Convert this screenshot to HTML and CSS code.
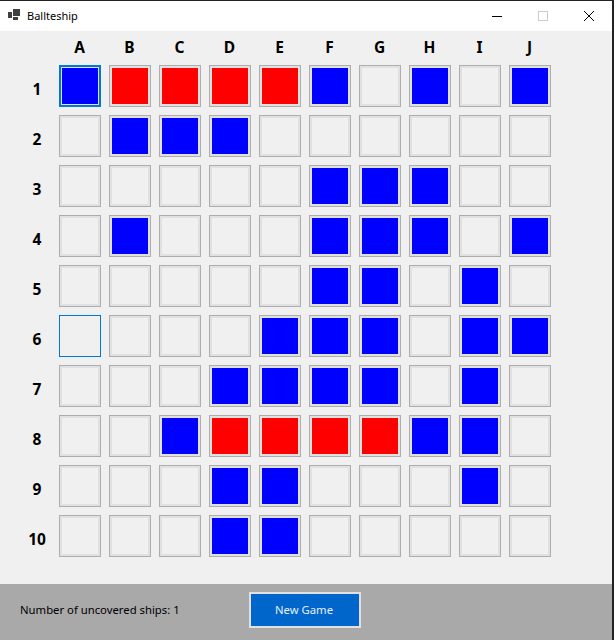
FILE: index.html
```html
<!DOCTYPE html>
<html>
  <head>
    <title>Ballteship</title>
    <meta charset="utf-8" />
    <link rel="stylesheet" href="styles.css">
  </head>
  <body>
    <div class="window">
      <div class="titlebar">
        <svg class="app-icon" width="13" height="12" viewBox="0 0 13 12">
          <rect x="0" y="4" width="4" height="6" fill="#404040" />
          <rect x="5" y="1" width="7" height="7" fill="#404040" />
          <rect x="5" y="9" width="5" height="3" fill="#404040" />
        </svg>
        <span class="title">Ballteship</span>
        <div class="controls">
          <svg class="control" width="46" height="30" viewBox="0 0 46 30">
            <path d="M18 15.5H28" stroke="#000" fill="none" />
          </svg>
          <svg class="control" width="46" height="30" viewBox="0 0 46 30">
            <rect x="18.5" y="10.5" width="9" height="9" stroke="#ccc" fill="none" />
          </svg>
          <svg class="control" width="46" height="30" viewBox="0 0 46 30">
            <path d="M18 10L28 20M28 10L18 20" stroke="#000" fill="none" />
          </svg>
        </div>
      </div>

      <div class="board">
        <div></div>
        <div class="col">A</div><div class="col">B</div><div class="col">C</div><div class="col">D</div><div class="col">E</div>
        <div class="col">F</div><div class="col">G</div><div class="col">H</div><div class="col">I</div><div class="col">J</div>

        <div class="row">1</div>
        <button class="cell ship focused"></button><button class="cell hit"></button><button class="cell hit"></button><button class="cell hit"></button><button class="cell hit"></button>
        <button class="cell ship"></button><button class="cell"></button><button class="cell ship"></button><button class="cell"></button><button class="cell ship"></button>

        <div class="row">2</div>
        <button class="cell"></button><button class="cell ship"></button><button class="cell ship"></button><button class="cell ship"></button><button class="cell"></button>
        <button class="cell"></button><button class="cell"></button><button class="cell"></button><button class="cell"></button><button class="cell"></button>

        <div class="row">3</div>
        <button class="cell"></button><button class="cell"></button><button class="cell"></button><button class="cell"></button><button class="cell"></button>
        <button class="cell ship"></button><button class="cell ship"></button><button class="cell ship"></button><button class="cell"></button><button class="cell"></button>

        <div class="row">4</div>
        <button class="cell"></button><button class="cell ship"></button><button class="cell"></button><button class="cell"></button><button class="cell"></button>
        <button class="cell ship"></button><button class="cell ship"></button><button class="cell ship"></button><button class="cell"></button><button class="cell ship"></button>

        <div class="row">5</div>
        <button class="cell"></button><button class="cell"></button><button class="cell"></button><button class="cell"></button><button class="cell"></button>
        <button class="cell ship"></button><button class="cell ship"></button><button class="cell"></button><button class="cell ship"></button><button class="cell"></button>

        <div class="row">6</div>
        <button class="cell hover"></button><button class="cell"></button><button class="cell"></button><button class="cell"></button><button class="cell ship"></button>
        <button class="cell ship"></button><button class="cell ship"></button><button class="cell"></button><button class="cell ship"></button><button class="cell ship"></button>

        <div class="row">7</div>
        <button class="cell"></button><button class="cell"></button><button class="cell"></button><button class="cell ship"></button><button class="cell ship"></button>
        <button class="cell ship"></button><button class="cell ship"></button><button class="cell"></button><button class="cell ship"></button><button class="cell"></button>

        <div class="row">8</div>
        <button class="cell"></button><button class="cell"></button><button class="cell ship"></button><button class="cell hit"></button><button class="cell hit"></button>
        <button class="cell hit"></button><button class="cell hit"></button><button class="cell ship"></button><button class="cell ship"></button><button class="cell"></button>

        <div class="row">9</div>
        <button class="cell"></button><button class="cell"></button><button class="cell"></button><button class="cell ship"></button><button class="cell ship"></button>
        <button class="cell"></button><button class="cell"></button><button class="cell"></button><button class="cell ship"></button><button class="cell"></button>

        <div class="row">10</div>
        <button class="cell"></button><button class="cell"></button><button class="cell"></button><button class="cell ship"></button><button class="cell ship"></button>
        <button class="cell"></button><button class="cell"></button><button class="cell"></button><button class="cell"></button><button class="cell"></button>
      </div>

      <div class="footer">
        <span class="status">Number of uncovered ships: 1</span>
        <button class="new-game">New Game</button>
      </div>
    </div>
  </body>
</html>
```

FILE: styles.css
```css
html, body {
  margin: 0;
  height: 100%;
  overflow: hidden;
}

body {
  font: 11.3px "Noto Sans", sans-serif;
  color: #000;
}

.window {
  display: flex;
  flex-direction: column;
  box-sizing: border-box;
  width: 614px;
  height: 640px;
  background: #f0f0f0;
  border-top: 1px solid #222;
  border-right: 2px solid #222;
}

.titlebar {
  display: flex;
  align-items: center;
  height: 30px;
  padding-left: 8px;
  background: #fff;
}

.app-icon {
  margin: 0 6px 4px 0;
}

.title {
  flex: 1;
  padding-bottom: 2px;
  font-size: 11px;
}

.controls {
  display: flex;
}

.control {
  display: block;
}

.board {
  flex: 1;
  display: grid;
  grid-template-columns: 28px repeat(10, 42px);
  grid-template-rows: 18px repeat(10, 42px);
  gap: 8px;
  padding: 8px 0 0 23px;
}

.col, .row {
  display: flex;
  align-items: center;
  justify-content: center;
  font-size: 15.5px;
  font-weight: bold;
}

.col {
  padding: 0 1px 2px 0;
}

.row {
  padding-top: 6px;
}

.cell {
  box-sizing: border-box;
  width: 42px;
  height: 42px;
  padding: 0;
  background: #f0f0f0;
  border: 1px solid #adadad;
  box-shadow: inset 0 0 0 2px #e1e1e1;
}

.ship {
  background: #00f;
}

.hit {
  background: #f00;
}

.focused {
  border: 2px solid #0078d7;
  box-shadow: inset 0 0 0 1px #e1e1e1;
}

.hover {
  border-color: #0078d7;
  box-shadow: none;
}

.footer {
  display: grid;
  grid-template-columns: 229px 112px;
  align-items: center;
  box-sizing: border-box;
  height: 56px;
  padding: 0 0 4px 20px;
  background: #a9a9a9;
}

.status {
  padding-bottom: 2px;
}

.new-game {
  box-sizing: border-box;
  height: 36px;
  padding: 0 2px 2px 0;
  font: 11.3px "Noto Sans", sans-serif;
  color: #e6f0fa;
  background: #06c;
  border: 2px solid #e1e1e1;
}
```
